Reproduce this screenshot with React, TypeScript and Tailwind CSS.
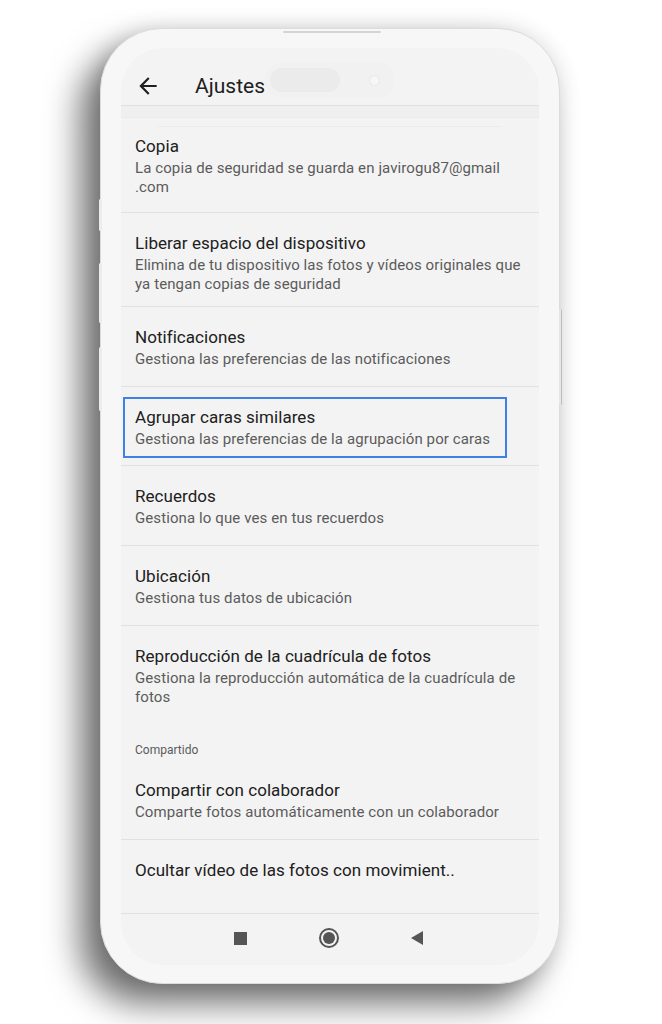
import React from 'react';

type Item = {
    title: string;
    sub?: string[];
    pad: string;
    highlight?: boolean;
    divider?: boolean;
};

const items: Item[] = [
    {
        title: 'Copia',
        sub: ['La copia de seguridad se guarda en javirogu87@gmail', '.com'],
        pad: 'pt-[8px] pb-[15px]',
        divider: true,
    },
    {
        title: 'Liberar espacio del dispositivo',
        sub: ['Elimina de tu dispositivo las fotos y vídeos originales que', 'ya tengan copias de seguridad'],
        pad: 'pt-[19px] pb-[12px]',
        divider: true,
    },
    {
        title: 'Notificaciones',
        sub: ['Gestiona las preferencias de las notificaciones'],
        pad: 'pt-[19px] pb-[17px]',
        divider: true,
    },
    {
        title: 'Agrupar caras similares',
        sub: ['Gestiona las preferencias de la agrupación por caras'],
        pad: 'pt-[19px] pb-[16px]',
        highlight: true,
        divider: true,
    },
    {
        title: 'Recuerdos',
        sub: ['Gestiona lo que ves en tus recuerdos'],
        pad: 'pt-[19px] pb-[17px]',
        divider: true,
    },
    {
        title: 'Ubicación',
        sub: ['Gestiona tus datos de ubicación'],
        pad: 'pt-[19px] pb-[17px]',
        divider: true,
    },
    {
        title: 'Reproducción de la cuadrícula de fotos',
        sub: ['Gestiona la reproducción automática de la cuadrícula de', 'fotos'],
        pad: 'pt-[19px] pb-[12px]',
    },
];

const shared: Item[] = [
    {
        title: 'Compartir con colaborador',
        sub: ['Comparte fotos automáticamente con un colaborador'],
        pad: 'pt-[21px] pb-[17px]',
        divider: true,
    },
    {
        title: 'Ocultar vídeo de las fotos con movimient..',
        pad: 'pt-[19px] pb-[30px]',
        divider: true,
    },
];

const Row: React.FC<{ item: Item }> = ({ item }) => (
    <div className={`relative ${item.divider ? 'border-b border-[#e1e1e1]' : ''}`}>
        <div className={`px-[14px] ${item.pad}`}>
            <div className="mb-[2px] text-[17px] leading-[22px] tracking-[0.05px] text-[#202020] whitespace-nowrap">
                {item.title}
            </div>
            {item.sub?.map((line) => (
                <div key={line} className="text-[15px] leading-[19px] tracking-[0.1px] text-[#5b5b5b] whitespace-nowrap">
                    {line}
                </div>
            ))}
        </div>
        {item.highlight && (
            <div className="absolute left-[2px] top-[10px] w-[384px] h-[61px] border-2 border-[#3f7fe6]" />
        )}
    </div>
);

export default function App() {
    return (
        <div className="w-[662px] h-[1024px] bg-white overflow-hidden" style={{ fontFamily: 'Roboto, "Noto Sans", sans-serif' }}>
            <div className="relative ml-[100px] mt-[28px] w-[460px] h-[956px] rounded-[62px] bg-[#f7f7f7] border border-[#dcdcdc] shadow-[-20px_20px_34px_rgba(0,0,0,0.55),0_0_22px_rgba(0,0,0,0.12)] px-[20px] pt-[19px] pb-[18px]">
                {/* speaker + side buttons */}
                <div className="absolute left-[182px] top-[2px] w-[98px] h-[2px] rounded-full bg-[#d4d4d4]" />
                <div className="absolute left-[-2px] top-[170px] w-[3px] h-[32px] rounded-full bg-[#ececec]" />
                <div className="absolute left-[-2px] top-[234px] w-[3px] h-[60px] rounded-full bg-[#ececec]" />
                <div className="absolute left-[-2px] top-[318px] w-[3px] h-[64px] rounded-full bg-[#ececec]" />
                <div className="absolute right-[-3px] top-[280px] w-[3px] h-[96px] rounded-full bg-[#e6e6e6] border-r border-[#bdbdbd]" />

                <div className="relative h-full rounded-[42px] bg-[#f3f3f3] overflow-hidden flex flex-col">
                    {/* camera cutout */}
                    <div className="absolute left-[144px] top-[14px] w-[130px] h-[36px] rounded-full bg-[#f1f1f1] flex items-center px-[5px]">
                        <div className="w-[70px] h-[24px] rounded-full bg-[#ebebeb]" />
                        <div className="ml-[29px] w-[11px] h-[11px] rounded-full bg-[#f6f6f6] border border-[#e8e8e8]" />
                    </div>

                    {/* header */}
                    <div className="h-[58px] shrink-0 flex items-center border-b border-[#e0e0e0] pt-[20px] pb-[2px]">
                        <div className="w-[54px] flex justify-center">
                            <svg width="26" height="26" viewBox="0 0 24 24" fill="#202020">
                                <path d="M20 11H7.83l5.59-5.59L12 4l-8 8 8 8 1.41-1.41L7.83 13H20v-2z" />
                            </svg>
                        </div>
                        <span className="ml-[20px] text-[21px] leading-[26px] text-[#202020]">Ajustes</span>
                    </div>
                    <div className="h-[12px] shrink-0 bg-[#efefef] border-b border-[#ebebeb]" />
                    <div className="h-[9px] shrink-0 mx-[37px] border-b border-[#ececec]" />

                    {/* list */}
                    <div className="flex-1 overflow-hidden">
                        {items.map((item) => (
                            <Row key={item.title} item={item} />
                        ))}
                        <div className="px-[14px] pt-[23px] text-[12px] leading-[16px] text-[#5b5b5b]">Compartido</div>
                        {shared.map((item) => (
                            <Row key={item.title} item={item} />
                        ))}
                    </div>

                    {/* nav bar */}
                    <div className="h-[51px] shrink-0 flex items-center pb-[3px]">
                        <div className="w-[126px] flex justify-end">
                            <div className="w-[13px] h-[13px] bg-[#555555]" />
                        </div>
                        <div className="w-[164px] flex justify-center">
                            <div className="w-[20px] h-[20px] rounded-full border-2 border-[#555555] flex items-center justify-center">
                                <div className="w-[12px] h-[12px] rounded-full bg-[#555555]" />
                            </div>
                        </div>
                        <div className="flex">
                            <svg width="12" height="14" viewBox="0 0 12 14">
                                <path d="M12 0 L12 14 L0 7 Z" fill="#555555" />
                            </svg>
                        </div>
                    </div>
                </div>
            </div>
        </div>
    );
}
